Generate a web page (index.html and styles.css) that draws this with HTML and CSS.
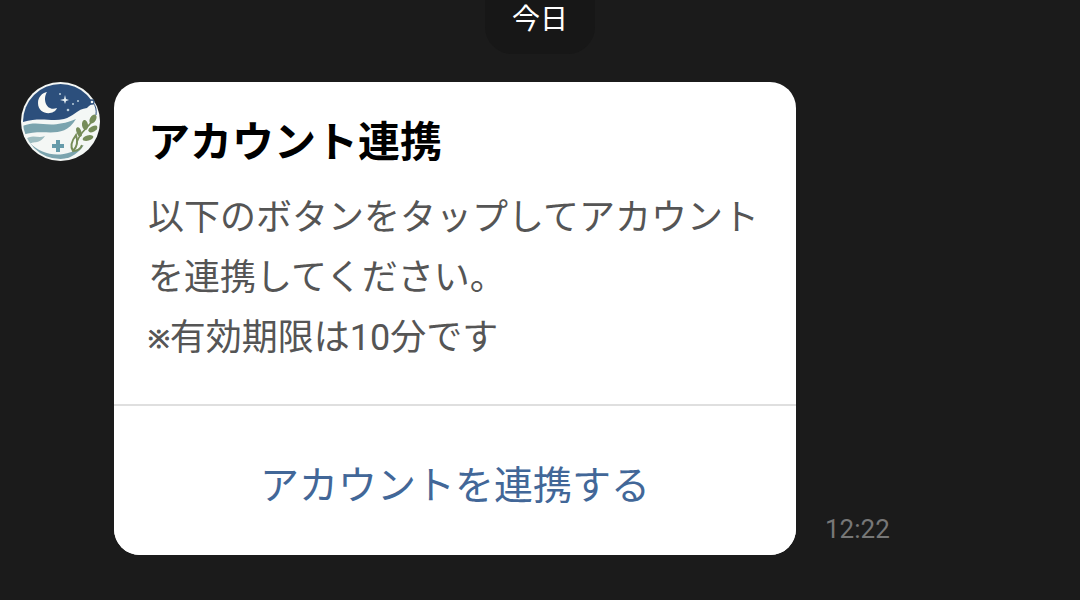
FILE: index.html
```html
<!DOCTYPE html>
<html lang="ja">
<head>
    <meta charset="UTF-8">
    <meta name="viewport" content="width=device-width, initial-scale=1.0">
    <title>アカウント連携</title>
    <link rel="stylesheet" href="styles.css">
</head>
<body>
    <main class="chat">
        <div class="date-label">今日</div>

        <div class="message">
            <!-- アイコン -->
            <svg class="avatar" viewBox="0 0 80 80" aria-hidden="true">
                <defs>
                    <clipPath id="circle"><circle cx="40.5" cy="39.5" r="37.5"/></clipPath>
                </defs>
                <circle cx="40.5" cy="39.5" r="39.5" fill="#f4f7f5"/>
                <g clip-path="url(#circle)">
                    <path d="M0 0H80V20Q71 21 67 26C57 27 53 35 44 37C30 40 20 34 0 41Z" fill="#2c4f7c"/>
                    <path d="M27 10C22 18 27 30 37 26C34 34 18 33 18 21C18 15 22 11 27 10Z" fill="#fafaf5"/>
                    <path d="M45 13L46 17L49 18L46 19L45 22L44 19L40 18L44 17Z" fill="#e6eff3"/>
                    <g fill="#b9cddb">
                        <circle cx="40" cy="12" r="1"/>
                        <circle cx="58" cy="19" r="1"/>
                        <circle cx="53" cy="22" r="1"/>
                        <circle cx="48" cy="28" r="1.3"/>
                    </g>
                    <path d="M0 45C20 36 27 49 56 37C42 60 24 44 0 54Z" fill="#7ba4ae"/>
                    <path d="M4 58C13 51 17 57 25 54C18 64 14 57 7 64Z" fill="#9dbcc0"/>
                    <path d="M10 61C24 75 45 77 64 63C50 84 22 82 10 61Z" fill="#7ba4ae"/>
                    <path d="M38 58V70M32 64H44" stroke="#669baa" stroke-width="4" fill="none"/>
                    <g fill="#768c59">
                        <path d="M57 60C60 50 66 48 73 38" fill="none" stroke="#768c59" stroke-width="1.5"/>
                        <ellipse cx="73" cy="37" rx="3" ry="5" transform="rotate(30 73 37)"/>
                        <ellipse cx="65" cy="43" rx="3" ry="5" transform="rotate(-8 65 43)"/>
                        <ellipse cx="73" cy="47" rx="2.7" ry="5" transform="rotate(65 73 47)"/>
                        <ellipse cx="59" cy="50" rx="2.4" ry="5" transform="rotate(-20 59 50)"/>
                        <ellipse cx="68" cy="56" rx="2.7" ry="5.5" transform="rotate(75 68 56)"/>
                    </g>
                    <path d="M53 69C49 63 53 57 56 53C58 59 57 65 53 69ZM53 69Q60 69 62 63" fill="none" stroke="#768c59" stroke-width="2"/>
                </g>
                <path d="M73 21Q77 25 76 33" fill="none" stroke="#2c4f7c" stroke-width="1"/>
                <circle cx="72" cy="20" r="2" fill="#f4f7f5" stroke="#2c4f7c" stroke-width="1.3"/>
            </svg>

            <section class="card">
                <div class="card-body">
                    <h1>アカウント連携</h1>
                    <p>以下のボタンをタップしてアカウントを連携してください。<br><span class="mark">※</span>有効期限は10分です</p>
                </div>
                <button type="button" class="card-button">アカウントを連携する</button>
            </section>

            <time class="time">12:22</time>
        </div>
    </main>
</body>
</html>
```
FILE: styles.css
```css
* {
    box-sizing: border-box;
}

body {
    margin: 0;
    background-color: #1b1b1b;
    font-family: Roboto, "Noto Sans CJK JP", sans-serif;
}

.chat {
    display: flex;
    flex-direction: column;
    gap: 28px;
}

.date-label {
    align-self: center;
    padding: 0 27px 14px;
    border-radius: 0 0 27px 27px;
    background-color: #171717;
    color: white;
    font-size: 28px;
    line-height: 40px;
}

.message {
    display: flex;
    align-items: flex-start;
    padding: 0 20px 44px;
}

.avatar {
    flex: none;
    width: 80px;
    height: 80px;
    margin-right: 14px;
}

.card {
    flex: 0 1 682px;
    border-radius: 26px;
    background-color: white;
    overflow: hidden;
}

.card-body {
    padding: 31px 34px 36px;
}

.card h1 {
    margin: 0 0 15px;
    color: black;
    font-size: 42px;
    line-height: 60px;
}

.card p {
    margin: 0;
    color: #555;
    font-size: 36px;
    line-height: 60px;
}

.mark {
    font-family: "Noto Sans", sans-serif;
    font-size: 26px;
    line-height: 1;
    vertical-align: 2px;
    -webkit-text-stroke: 1px #555;
}

.card-button {
    display: block;
    width: 100%;
    padding: 51px 20px 40px;
    border: none;
    border-top: 2px solid #dfdfdf;
    background-color: white;
    color: #426798;
    font-family: inherit;
    font-size: 39px;
    line-height: 58px;
    cursor: pointer;
}

.time {
    align-self: flex-end;
    margin-left: 29px;
    padding-bottom: 10px;
    color: #777;
    font-size: 26px;
    line-height: 32px;
}
```
